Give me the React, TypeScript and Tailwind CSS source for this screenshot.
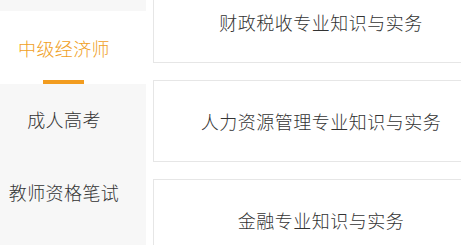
const menu = ["中级经济师", "成人高考", "教师资格笔试"];

const subjects = [
  "财政税收专业知识与实务",
  "人力资源管理专业知识与实务",
  "金融专业知识与实务",
];

export default function App() {
  const active = 0;

  return (
    <div
      className="flex w-[461px] h-[245px] overflow-hidden bg-white"
      style={{ fontFamily: '"Noto Sans CJK SC", "Noto Sans", sans-serif' }}
    >
      {/* left category menu */}
      <div className="w-[146px] shrink-0 bg-[#f7f7f7] pt-[11px]">
        {menu.map((label, i) => (
          <div
            key={label}
            className={`relative flex h-[73px] items-center justify-center pr-[18px] text-[18px] font-light tracking-[0.4px] ${
              i === active ? "bg-white text-[#f0a01e]" : "text-[#333333]"
            }`}
          >
            <span className={i === active ? "pt-[1px]" : "-mt-[2px]"}>{label}</span>
            {i === active && (
              <span className="absolute bottom-0 left-[43px] h-[4px] w-[41px] bg-[#f29c1f]" />
            )}
          </div>
        ))}
      </div>

      {/* subject cards */}
      <div className="flex flex-col gap-[17px] pl-[7px] -mt-[19px]">
        {subjects.map((s) => (
          <div
            key={s}
            className="flex h-[82px] w-[336px] shrink-0 items-center justify-center border border-[#e6e6e6] bg-white text-[18px] font-light tracking-[0.5px] text-[#333333]"
          >
            {s}
          </div>
        ))}
      </div>
    </div>
  );
}
